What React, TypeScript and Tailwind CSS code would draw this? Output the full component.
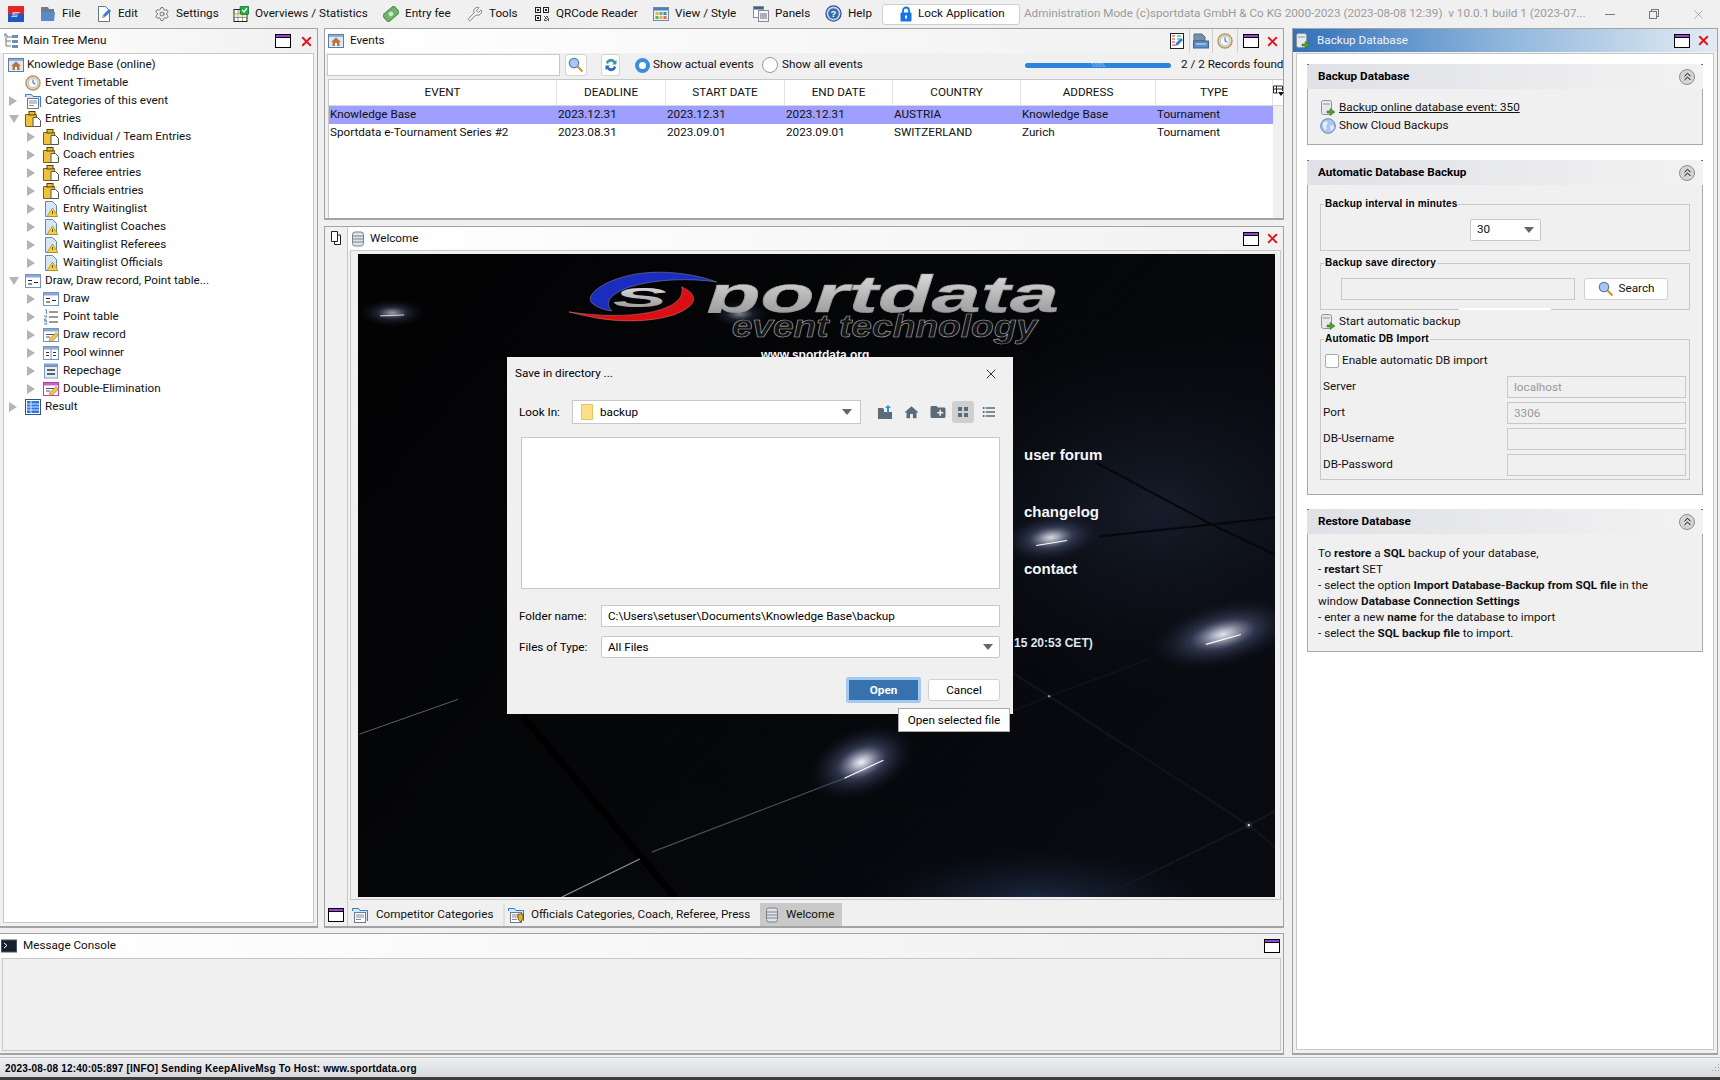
import { ChevronsUp, Settings, Wrench, X } from "lucide-react";
import { MdCreateNewFolder, MdFormatListBulleted, MdHome } from "react-icons/md";
import type { ReactNode } from "react";

const MinBox = () => (
  <span className="inline-flex flex-col w-[16px] h-[14px] border border-black bg-white shrink-0">
    <span className="h-[2px] bg-[#9a3ee0]" />
    <span className="h-px bg-black" />
  </span>
);

const RedX = () => <X size={15} strokeWidth={3} className="text-[#e8141c] shrink-0" />;

const Ico = ({ children }: { children: ReactNode }) => (
  <svg viewBox="0 0 16 16" width="16" height="16" className="shrink-0">
    {children}
  </svg>
);

const AppLogo = () => (
  <Ico>
    <rect width="16" height="8" fill="#e3262b" />
    <rect y="8" width="16" height="8" fill="#1d59c4" />
    <path d="M5 6h7l-1 1.500H6.500L5.500 9H10l-1 2H3l1-1.500h4.500L9 8.500H4z" fill="#c9ccd2" />
  </Ico>
);
const FileIco = () => (
  <Ico>
    <path d="M1 1h7l1 2h5v11H1z" fill="#6d7b8c" />
    <path d="M1 6h14l-1 9H1z" fill="#5b8ac6" />
  </Ico>
);
const EditIco = () => (
  <Ico>
    <path d="M2.500.5h7l4 4v11h-11z" fill="#fff" stroke="#66768a" />
    <path d="M6 12l1-3 6-6 2 2-6 6z" fill="#2f7fdc" />
    <path d="M6 12l1-3 2 2z" fill="#e9b44c" />
  </Ico>
);
const OverIco = () => (
  <Ico>
    <rect x="1" y="3.500" width="13" height="12" fill="#fff" stroke="#222" />
    <path d="M1 8h13M1 11.500h13M5 4v11M9.500 4v11" stroke="#555" strokeWidth=".6" />
    <rect x="1.500" y="8" width="12" height="3" fill="#f3df8c" opacity=".7" />
    <rect x="7" y="0" width="9" height="8.500" rx="1.500" fill="#27a64a" stroke="#0a5d22" strokeWidth=".6" />
    <path d="M9 4l2 2 3-4" fill="none" stroke="#fff" strokeWidth="1.300" />
  </Ico>
);
const MoneyIco = () => (
  <Ico>
    <g transform="rotate(-40 8 8)">
      <rect x="0.500" y="3.500" width="15" height="9" rx="1" fill="#72b36a" stroke="#4b8b46" />
      <circle cx="8" cy="8" r="2.300" fill="#cfe8c5" />
    </g>
  </Ico>
);
const QR_CELLS = ["1110101", "1010011", "1110110", "0001010", "1101101", "0110011", "1011101"];
const QrIco = () => (
  <Ico>
    <path d="M1 1h6v6H1zM2 2v4h4V2zM9 1h6v6H9zM10 2v4h4V2zM1 9h6v6H1zM2 10v4h4v-4z" fill="#222" fillRule="evenodd" />
    <path d="M3 3h2v2H3zM11 3h2v2h-2zM3 11h2v2H3z" fill="#222" />
    {QR_CELLS.map((row, y) =>
      row.split("").map((c, x) =>
        c === "1" && x > 1 && y > 1 ? <rect key={`${x}${y}`} x={8 + x} y={8 + y} width=".9" height=".9" fill="#333" /> : null
      )
    )}
  </Ico>
);
const ViewIco = () => (
  <Ico>
    <rect x=".5" y="1.500" width="15" height="13" fill="#e9eef6" stroke="#6f88aa" />
    <rect x="1" y="2" width="14" height="2.500" fill="#4a7fc1" />
    <rect x="2.500" y="6" width="3" height="3" fill="#e4b73a" />
    <rect x="6.500" y="6" width="3" height="3" fill="#62b256" />
    <rect x="10.500" y="6" width="3" height="3" fill="#4a7fc1" />
    <rect x="2.500" y="10" width="3" height="3" fill="#62b256" />
    <rect x="6.500" y="10" width="3" height="3" fill="#e4b73a" />
    <rect x="10.500" y="10" width="3" height="3" fill="#d76a5a" />
  </Ico>
);
const PanelsIco = () => (
  <Ico>
    <rect x=".5" y=".5" width="10" height="11" fill="#fff" stroke="#8a8a8a" />
    <rect x="1" y="1" width="9" height="2.500" fill="#3c5f92" />
    <rect x="5.500" y="4.500" width="10" height="11" fill="#f4f4f4" stroke="#8a8a8a" />
    <path d="M7 8h7M7 10h7M7 12h7" stroke="#5a6d88" />
  </Ico>
);
const HelpIco = () => (
  <svg viewBox="0 0 18 18" width="17" height="17" className="shrink-0">
    <circle cx="9" cy="9" r="8" fill="#c3d4ea" stroke="#2f5590" strokeWidth="1.400" />
    <circle cx="9" cy="9" r="5.500" fill="#3a69aa" />
    <text x="9" y="12.500" textAnchor="middle" fontSize="10" fontWeight="700" fontFamily="Liberation Sans" fill="#fff">?</text>
  </svg>
);
const LockIco = () => (
  <svg viewBox="0 0 12 16" width="12" height="16" className="shrink-0">
    <path d="M3 7V4.500a3 3 0 016 0V7" fill="none" stroke="#1673e6" strokeWidth="1.800" />
    <rect x="0.500" y="6.500" width="11" height="9" rx="1" fill="#1673e6" />
    <rect x="5" y="9.500" width="2" height="3" fill="#fff" />
  </svg>
);

const TreeIco = () => (
  <Ico>
    <path d="M1 2h3v2h5M3 4v9h5M3 8h5" fill="none" stroke="#777" />
    <rect x="9" y="2" width="6" height="3" fill="#6f8db5" />
    <rect x="9" y="7" width="6" height="3" fill="#6f8db5" />
    <rect x="9" y="12" width="6" height="3" fill="#6f8db5" />
    <rect x="1" y="0.500" width="3" height="3" fill="#9ab" />
  </Ico>
);
const HomeIco = () => (
  <Ico>
    <rect x=".5" y="1.500" width="15" height="13" fill="#dfe9f5" stroke="#5d7da6" />
    <rect x="1" y="2" width="14" height="2" fill="#8fb0d8" />
    <path d="M8 4.500l5 4.500h-1.500v4h-7V9H3z" fill="#b6763e" />
    <rect x="7" y="10" width="2" height="3" fill="#fff" />
  </Ico>
);
const ClockIco = () => (
  <Ico>
    <circle cx="8" cy="8" r="7" fill="#e9ddc3" stroke="#b79a62" strokeWidth="1.500" />
    <circle cx="8" cy="8" r="4.800" fill="#f4f7fb" stroke="#8fa6c4" strokeWidth=".6" />
    <path d="M8 4.500V8l2.500 1" fill="none" stroke="#3c5f92" strokeWidth="1" />
  </Ico>
);
const CatIco = ({ badge }: { badge?: boolean }) => (
  <Ico>
    <path d="M.5 4V1.500h6L8 3.500h7.500V14" fill="#d7e6f7" stroke="#2c7fd4" />
    <rect x="2.500" y="5.500" width="11" height="10" fill="#fff" stroke="#6d7b8c" />
    <path d="M4 8h8M4 10h8M4 12.500h5" stroke="#7d8a99" />
    {badge && <path d="M10 7h5v5l-2.500 3L10 12z" fill="#e0b21c" stroke="#222" strokeWidth=".6" />}
  </Ico>
);
const ClipIco = () => (
  <Ico>
    <path d="M4.500 1.500h5v2h2v12h-11v-12h4z" fill="#f0c23c" stroke="#7c5f14" />
    <rect x="4" y="0.500" width="6" height="3.500" fill="#e6bb3a" stroke="#55430f" />
    <path d="M8 6.500h4.500l3 3v6H8z" fill="#fff" stroke="#555" />
  </Ico>
);
const WaitIco = () => (
  <Ico>
    <path d="M2.500.5h7l4 4v11h-11z" fill="#d7e6f7" stroke="#5b86b9" />
    <path d="M9.500 7l5.500 8.500H4z" fill="#f6cf3f" stroke="#a8861a" strokeWidth=".7" />
    <path d="M9.500 10v3" stroke="#6a4f05" />
  </Ico>
);
const WinIco = ({ head = "#6f94c5", children }: { head?: string; children?: ReactNode }) => (
  <Ico>
    <rect x=".5" y="1.500" width="15" height="13" fill="#fff" stroke={head} />
    <rect x="1" y="2" width="14" height="2.500" fill={head} opacity=".8" />
    {children}
  </Ico>
);
const DrawIco = () => (
  <WinIco>
    <path d="M3 7.500h4M3 11h4M9 9.500h4" stroke="#222" />
  </WinIco>
);
const PointIco = () => (
  <Ico>
    <path d="M6 3h9M6 8h9M6 13h9" stroke="#333" strokeWidth="1.200" />
    <path d="M2 1h1.500v4M1 7h3L1 11h3M1 12h3l-1 1.500 1 1.500H1" fill="none" stroke="#5b8ac6" />
  </Ico>
);
const PencilBit = () => <path d="M6 15l1-3.500 6-6 2.500 2.500-6 6z" fill="#f1c24e" stroke="#8c6a1c" strokeWidth=".6" />;
const RecordIco = () => (
  <WinIco>
    <path d="M3 7.500h8M3 10h4" stroke="#555" />
    <PencilBit />
  </WinIco>
);
const PoolIco = () => (
  <WinIco>
    <path d="M8 4v10" stroke="#6f94c5" />
    <path d="M3 7.500h3M3 10.500h3M10 7.500h3M10 10.500h3" stroke="#333" />
  </WinIco>
);
const RepIco = () => (
  <Ico>
    <rect x="1.500" y="1" width="13" height="14" fill="#e7edf5" stroke="#7c99c0" />
    <rect x="2" y="1.500" width="12" height="2.500" fill="#6f94c5" />
    <path d="M4 7h8M4 11h8" stroke="#333" strokeWidth="1.500" />
  </Ico>
);
const DoubleIco = () => (
  <WinIco head="#b93db8">
    <path d="M3 7.500h8M3 10h4" stroke="#555" />
    <PencilBit />
  </WinIco>
);
const ResultIco = () => (
  <Ico>
    <rect x=".5" y=".5" width="15" height="15" fill="#fff" stroke="#34507c" />
    <rect x="2" y="2" width="12" height="12" fill="#2d78e0" />
    <path d="M2 5h12M2 8h12M2 11h12M6 2v12" stroke="#fff" strokeWidth=".8" />
  </Ico>
);
const DbIco = () => (
  <Ico>
    <rect x="2.500" y="1" width="11" height="14" rx="2.500" fill="#dfe3e8" stroke="#78838f" />
    <path d="M3 5h10M3 8h10M3 11h10" stroke="#78838f" />
  </Ico>
);
const DbArrowIco = () => (
  <Ico>
    <rect x="1.500" y=".5" width="10" height="14" rx="2" fill="#e6e9ed" stroke="#8a949e" />
    <path d="M3 4h7" stroke="#8a949e" />
    <path d="M7 11h3V8.500l5 3.500-5 3.500V13H7z" fill="#4f9e37" stroke="#2c6b1b" strokeWidth=".5" />
  </Ico>
);
const GlobeIco = () => (
  <Ico>
    <circle cx="8" cy="8" r="7.300" fill="#a9c8ee" stroke="#5b86b9" />
    <path d="M3 5l3-2 2 2-2 3 1 3-2 1-2-3zM10 8l3-1 1 3-3 3z" fill="#e8eef6" />
  </Ico>
);
const TerminalIco = () => (
  <Ico>
    <rect x=".5" y="2" width="15" height="12" fill="#16212e" stroke="#44546a" />
    <path d="M3 5l3 2.500L3 10" fill="none" stroke="#fff" />
  </Ico>
);
const CopyIco = () => (
  <Ico>
    <path d="M3.500 1.500h6v10h-6zM9.500 5h3v9.500h-6v-3" fill="#fff" stroke="#222" />
  </Ico>
);
const RefreshIco = () => (
  <Ico>
    <path d="M3 6a5 5 0 019-2l1.500-1v4.500H9l1.500-1.300A3 3 0 005 7z" fill="#3a9aa8" />
    <path d="M13 10a5 5 0 01-9 2l-1.500 1V8.500H7l-1.500 1.300A3 3 0 0011 9z" fill="#2d6fb5" />
  </Ico>
);
const SearchIco = () => (
  <Ico>
    <circle cx="6" cy="6" r="4.700" fill="#a8c8f0" stroke="#5b7fb4" strokeWidth="1.200" />
    <path d="M9.500 9.500l5 5" stroke="#c8962c" strokeWidth="2.200" />
  </Ico>
);
const SheetIco = () => (
  <Ico>
    <rect x="1.500" y=".5" width="13" height="15" fill="#fff" stroke="#222" />
    <path d="M3 3h3M3 6h3M3 9h3M3 12h3" stroke="#d2392f" />
    <path d="M8 3h4M8 6h3" stroke="#2f9e44" />
    <path d="M6 13l1-3 5-5 2 2-5 5z" fill="#2f7fdc" />
  </Ico>
);
const PrintIco = () => (
  <Ico>
    <path d="M1 1h8l3 3v4H1z" fill="#7d8fa8" stroke="#556a86" />
    <rect x=".5" y="8" width="15" height="7" fill="#5f8ec6" stroke="#3e6493" />
    <path d="M3 11h10" stroke="#dfe9f5" />
  </Ico>
);
const ColsIco = () => (
  <svg viewBox="0 0 12 12" width="12" height="12">
    <path d="M.5 1h9v5M.5 1v7h4M3.500 1v7M.5 4h9" fill="none" stroke="#222" />
    <path d="M5 7h6l-3 4z" fill="#111" />
  </svg>
);
const Grip = () => (
  <svg viewBox="0 0 12 12" width="12" height="12" className="shrink-0">
    <path d="M10 2h1v1h-1zM7 5h1v1H7zM10 5h1v1h-1zM4 8h1v1H4zM7 8h1v1H7zM10 8h1v1h-1z" fill="#9a9a9a" />
  </svg>
);

const MENU: { icon: ReactNode; label: string; w: string }[] = [
  { icon: <FileIco />, label: "File", w: "w-[56px]" },
  { icon: <EditIco />, label: "Edit", w: "w-[58px]" },
  { icon: <Settings size={16} strokeWidth={1.5} className="text-[#707070]" />, label: "Settings", w: "w-[79px]" },
  { icon: <OverIco />, label: "Overviews / Statistics", w: "w-[150px]" },
  { icon: <MoneyIco />, label: "Entry fee", w: "w-[84px]" },
  { icon: <Wrench size={16} strokeWidth={1.3} className="text-[#777]" />, label: "Tools", w: "w-[67px]" },
  { icon: <QrIco />, label: "QRCode Reader", w: "w-[119px]" },
  { icon: <ViewIco />, label: "View / Style", w: "w-[100px]" },
  { icon: <PanelsIco />, label: "Panels", w: "w-[72px]" },
  { icon: <HelpIco />, label: "Help", w: "w-[57px]" },
];

function TopBar() {
  return (
    <div className="h-[28px] flex items-center shrink-0 pl-[8px]">
      <div className="w-[32px]">
        <AppLogo />
      </div>
      {MENU.map((m) => (
        <div key={m.label} className={`${m.w} flex items-center gap-[6px] shrink-0`}>
          {m.icon}
          <span className="whitespace-nowrap">{m.label}</span>
        </div>
      ))}
      <div className="w-[138px] h-[21px] bg-white border border-[#cfcfcf] rounded-[3px] flex items-center gap-[6px] pl-[17px] shrink-0">
        <LockIco />
        <span>Lock Application</span>
      </div>
      <div className="w-[575px] ml-[4px] text-[#9b9b9b] whitespace-nowrap shrink-0">
        Administration Mode (c)sportdata GmbH &amp; Co KG 2000-2023 (2023-08-08 12:39)&nbsp; v 10.0.1 build 1 (2023-07...
      </div>
      <div className="flex-1 flex items-center pl-[6px] gap-[34px] text-[#8a8a8a]">
        <span className="w-[10px] h-px bg-[#777]" />
        <span className="relative w-[10px] h-[10px]">
          <span className="absolute left-[2px] top-0 w-[8px] h-[8px] border border-[#777]" />
          <span className="absolute left-0 top-[2px] w-[8px] h-[8px] border border-[#777] bg-[#f0f0f0]" />
        </span>
        <X size={15} strokeWidth={1} className="ml-[-2px]" />
      </div>
    </div>
  );
}

type Node = { label: string; icon: ReactNode; lvl: 0 | 1 | 2; arrow?: "r" | "d" };
const TREE: Node[] = [
  { label: "Knowledge Base (online)", icon: <HomeIco />, lvl: 0 },
  { label: "Event Timetable", icon: <ClockIco />, lvl: 1 },
  { label: "Categories of this event", icon: <CatIco />, lvl: 1, arrow: "r" },
  { label: "Entries", icon: <ClipIco />, lvl: 1, arrow: "d" },
  { label: "Individual / Team Entries", icon: <ClipIco />, lvl: 2, arrow: "r" },
  { label: "Coach entries", icon: <ClipIco />, lvl: 2, arrow: "r" },
  { label: "Referee entries", icon: <ClipIco />, lvl: 2, arrow: "r" },
  { label: "Officials entries", icon: <ClipIco />, lvl: 2, arrow: "r" },
  { label: "Entry Waitinglist", icon: <WaitIco />, lvl: 2, arrow: "r" },
  { label: "Waitinglist Coaches", icon: <WaitIco />, lvl: 2, arrow: "r" },
  { label: "Waitinglist Referees", icon: <WaitIco />, lvl: 2, arrow: "r" },
  { label: "Waitinglist Officials", icon: <WaitIco />, lvl: 2, arrow: "r" },
  { label: "Draw, Draw record, Point table...", icon: <DrawIco />, lvl: 1, arrow: "d" },
  { label: "Draw", icon: <DrawIco />, lvl: 2, arrow: "r" },
  { label: "Point table", icon: <PointIco />, lvl: 2, arrow: "r" },
  { label: "Draw record", icon: <RecordIco />, lvl: 2, arrow: "r" },
  { label: "Pool winner", icon: <PoolIco />, lvl: 2, arrow: "r" },
  { label: "Repechage", icon: <RepIco />, lvl: 2, arrow: "r" },
  { label: "Double-Elimination", icon: <DoubleIco />, lvl: 2, arrow: "r" },
  { label: "Result", icon: <ResultIco />, lvl: 1, arrow: "r" },
];

function TreeRow({ n }: { n: Node }) {
  const offset = n.lvl === 0 ? "pl-[4px] gap-[3px]" : n.lvl === 1 ? "pl-[4px] gap-[4px]" : "pl-[22px] gap-[4px]";
  return (
    <div className={`h-[18px] flex items-center ${offset}`}>
      {n.lvl > 0 && (
        <span className="w-[13px] pl-px shrink-0 flex items-center">
          {n.arrow === "r" && <span className="w-0 h-0 border-y-[5px] border-y-transparent border-l-[8px] border-l-[#b4b4b4]" />}
          {n.arrow === "d" && <span className="w-0 h-0 border-x-[5px] border-x-transparent border-t-[8px] border-t-[#b4b4b4]" />}
        </span>
      )}
      {n.icon}
      <span className="whitespace-nowrap">{n.label}</span>
    </div>
  );
}

const COLS = "grid grid-cols-[228px_109px_119px_108px_128px_135px_117px]";
const HEAD = ["EVENT", "DEADLINE", "START DATE", "END DATE", "COUNTRY", "ADDRESS", "TYPE"];
const ROWS = [
  ["Knowledge Base", "2023.12.31", "2023.12.31", "2023.12.31", "AUSTRIA", "Knowledge Base", "Tournament"],
  ["Sportdata e-Tournament Series #2", "2023.08.31", "2023.09.01", "2023.09.01", "SWITZERLAND", "Zurich", "Tournament"],
];

function Events() {
  return (
    <div className="h-[192px] border border-[#a3a3a3] border-b-2 flex flex-col shrink-0">
      <div className="h-[24px] flex items-center pl-[3px] pr-[3px] bg-linear-to-r from-white to-[#f0f0f0] shrink-0">
        <HomeIco />
        <span className="ml-[6px]">Events</span>
        <div className="ml-auto flex items-center">
          <div className="flex items-center pr-[4px] border-r border-[#d0d0d0] h-[24px]"><SheetIco /></div>
          <div className="flex items-center px-[3px] border-r border-[#d0d0d0] h-[24px]"><PrintIco /></div>
          <div className="flex items-center px-[4px] border-r border-[#d0d0d0] h-[24px]"><ClockIco /></div>
          <div className="flex items-center gap-[6px] pl-[5px]"><MinBox /><RedX /></div>
        </div>
      </div>
      <div className="h-[26px] flex items-center pl-[2px] pb-[2px] shrink-0 whitespace-nowrap">
        <div className="w-[233px] h-[22px] bg-white border border-[#c8c8c8] shrink-0" />
        <div className="ml-[5px] w-[22px] h-[22px] bg-white border border-[#d5d5d5] rounded-[3px] flex items-center justify-center shrink-0"><SearchIco /></div>
        <div className="ml-[14px] w-[19px] h-[22px] bg-white border border-[#d5d5d5] rounded-[3px] flex items-center justify-center shrink-0"><RefreshIco /></div>
        <span className="ml-[15px] w-[15px] h-[15px] rounded-full border-[4px] border-[#3c8ddc] bg-white shrink-0" />
        <span className="ml-[3px] w-[109px] shrink-0">Show actual events</span>
        <span className="w-[16px] h-[16px] rounded-full border border-[#9a9a9a] bg-white shrink-0" />
        <span className="ml-[4px] w-[81px] shrink-0">Show all events</span>
        <div className="ml-[162px] w-[146px] h-[5px] rounded-full bg-[#2a84dd] flex items-center justify-center shrink-0">
          <span className="text-[6px] text-[#9cc4ee] leading-none">100%</span>
        </div>
        <span className="ml-[10px]">2 / 2 Records found</span>
      </div>
      <div className="flex-1 ml-[3px] border-t border-[#c8c8c8] border-l flex flex-col bg-white min-h-0">
        <div className="flex h-[26px] bg-white border-b border-[#d8d8d8] shrink-0">
          <div className={COLS}>
            {HEAD.map((h) => (
              <div key={h} className="flex items-center justify-center border-r border-[#e4e4e4]">{h}</div>
            ))}
          </div>
          <div className="flex-1 flex justify-center pt-[5px]"><ColsIco /></div>
        </div>
        <div className="flex flex-1 min-h-0">
          <div>
            {ROWS.map((r, i) => (
              <div key={r[0]} className={`${COLS} h-[18px] items-center ${i === 0 ? "bg-[#9f9fff]" : ""}`}>
                {r.map((c, j) => (
                  <div key={j} className="pl-px whitespace-nowrap">{c}</div>
                ))}
              </div>
            ))}
          </div>
          <div className="flex-1 bg-[#f0f0f0]" />
        </div>
      </div>
    </div>
  );
}

function Wallpaper() {
  const spots = [
    { cx: 392, cy: 313, rx: 34, ry: 14, r: 0, o: 0.6 },
    { cx: 740, cy: 314, rx: 30, ry: 14, r: 0, o: 0.5 },
    { cx: 1052, cy: 538, rx: 50, ry: 24, r: -8, o: 0.85 },
    { cx: 1224, cy: 635, rx: 74, ry: 32, r: -14, o: 0.9 },
    { cx: 862, cy: 763, rx: 56, ry: 34, r: -22, o: 0.95 },
  ];
  return (
    <svg viewBox="358 254 918 644" className="absolute inset-0 w-full h-full">
      <defs>
        <linearGradient id="wall" x1="0" y1="0" x2="1" y2="0.6">
          <stop offset="0" stopColor="#010102" />
          <stop offset="0.6" stopColor="#040508" />
          <stop offset="1" stopColor="#07090f" />
        </linearGradient>
        <radialGradient id="navy">
          <stop offset="0" stopColor="#171d2d" stopOpacity=".9" />
          <stop offset="1" stopColor="#0a0d14" stopOpacity="0" />
        </radialGradient>
        <radialGradient id="glow">
          <stop offset="0" stopColor="#ffffff" />
          <stop offset="0.15" stopColor="#d5d9ef" stopOpacity=".85" />
          <stop offset="0.45" stopColor="#5a6690" stopOpacity=".5" />
          <stop offset="1" stopColor="#1a2036" stopOpacity="0" />
        </radialGradient>
        <radialGradient id="blue">
          <stop offset="0" stopColor="#20304e" stopOpacity=".9" />
          <stop offset="1" stopColor="#101828" stopOpacity="0" />
        </radialGradient>
        <pattern id="mesh" width="4" height="4" patternUnits="userSpaceOnUse">
          <circle cx="1" cy="1" r=".7" fill="#fff" opacity=".025" />
          <circle cx="3" cy="3" r=".7" fill="#fff" opacity=".025" />
        </pattern>
        <linearGradient id="letters" x1="0" y1="0" x2="0" y2="1">
          <stop offset="0" stopColor="#e6e6e6" />
          <stop offset="1" stopColor="#8f8f8f" />
        </linearGradient>
        <clipPath id="noDesc">
          <rect x="700" y="260" width="380" height="53" />
        </clipPath>
      </defs>
      <rect x="358" y="254" width="918" height="644" fill="url(#wall)" />
      <ellipse cx="1160" cy="510" rx="270" ry="190" fill="url(#navy)" />
      <ellipse cx="1040" cy="905" rx="170" ry="55" fill="url(#blue)" />
      <rect x="358" y="254" width="918" height="644" fill="url(#mesh)" />

      <path d="M1097 463L1213 525 1276 555M1100 537L1213 525 1276 518" stroke="#06070b" strokeWidth="2" fill="none" />
      <path d="M523 717L675 898" stroke="#000" strokeWidth="7" />
      <path d="M1013 712L1050 697 1150 660" stroke="#101216" strokeWidth="2" fill="none" />
      <path d="M1000 665L1050 697 1250 826 1276 848" stroke="#111318" strokeWidth="2.500" fill="none" />
      <path d="M1103 898L1250 826 1276 812" stroke="#15171d" strokeWidth="2" fill="none" />
      <path d="M562 898L640 860" stroke="#8f939c" strokeWidth="1.200" />
      <path d="M652 853L845 779" stroke="#4a4e58" strokeWidth="1.200" />
      <path d="M359 735L458 700" stroke="#5c606a" strokeWidth="1" />
      <circle cx="1050" cy="697" r="1.200" fill="#8d919b" />
      <circle cx="1250" cy="826" r="3.500" fill="#1f2632" />
      <circle cx="1250" cy="826" r="1.200" fill="#d8dce6" />

      {spots.map((s) => (
        <ellipse key={s.cx} cx={s.cx} cy={s.cy} rx={s.rx} ry={s.ry} fill="url(#glow)" opacity={s.o} transform={`rotate(${s.r} ${s.cx} ${s.cy})`} />
      ))}
      <path d="M1037 546L1068 541M1207 645L1242 635M845 779L884 761" stroke="#fff" strokeWidth="1.100" />
      <path d="M380 316L404 315" stroke="#ddd" strokeWidth="1" />

      <path d="M717 282C690 272 650 268 620 278 598 285 586 296 592 303 596 307 604 310 612 311 604 303 610 294 630 287 655 279 690 278 717 282z" fill="#1b2dbf" stroke="#8d93b8" strokeWidth=".5" />
      <path d="M682 287C692 291 697 298 692 304 682 316 655 321 630 321 605 321 585 316 569 312 590 315 615 317 640 314 665 311 686 302 682 287z" fill="#d90f14" stroke="#e8a0a0" strokeWidth=".4" />
      <text x="613" y="307" fontFamily="Liberation Sans" fontSize="28" fontWeight="700" fontStyle="italic" fill="url(#letters)" textLength="54" lengthAdjust="spacingAndGlyphs">S</text>
      <text x="707" y="312" fontFamily="Liberation Sans" fontSize="52" fontStyle="italic" fill="url(#letters)" stroke="#9a9a9a" strokeWidth=".6" textLength="353" lengthAdjust="spacingAndGlyphs" clipPath="url(#noDesc)">portdata</text>
      <text x="732" y="337" fontFamily="Liberation Sans" fontSize="31" fontStyle="italic" fill="#151515" stroke="#b0b0b0" strokeWidth=".55" textLength="306" lengthAdjust="spacingAndGlyphs">event technology</text>
    </svg>
  );
}

function Welcome() {
  return (
    <div className="flex-1 flex border border-[#a3a3a3] border-b-2 min-h-0">
      <div className="w-[23px] flex flex-col items-center justify-between pt-[3px] pb-[4px] border-r border-[#c8c8c8] shrink-0">
        <CopyIco />
        <MinBox />
      </div>
      <div className="flex-1 flex flex-col min-w-0">
        <div className="h-[23px] flex items-center pl-[2px] pr-[3px] bg-linear-to-r from-white to-[#f2f2f2] shrink-0">
          <DbIco />
          <span className="ml-[4px]">Welcome</span>
          <div className="ml-auto flex items-center gap-[6px]"><MinBox /><RedX /></div>
        </div>
        <div className="flex-1 mx-[2px] border border-[#c8c8c8] pl-[7px] pr-[5px] pt-[3px] pb-[2px] min-h-0">
          <div className="relative w-full h-full bg-black overflow-hidden font-['Liberation_Sans',sans-serif] font-bold text-[#f4f6fb]">
            <Wallpaper />
            <span className="absolute left-[403px] top-[94px] text-[12px] leading-[14px]">www.sportdata.org</span>
            <span className="absolute left-[666px] top-[192px] text-[15px] leading-[18px]">user forum</span>
            <span className="absolute left-[666px] top-[249px] text-[15px] leading-[18px]">changelog</span>
            <span className="absolute left-[666px] top-[306px] text-[15px] leading-[18px]">contact</span>
            <span className="absolute left-[656px] top-[382px] text-[12px] leading-[14px] text-[#dfe8f4]">15 20:53 CET)</span>
          </div>
        </div>
        <div className="h-[26px] pt-[3px] flex items-start shrink-0">
          <div className="w-[157px] h-[23px] flex items-center gap-[8px] pl-[4px] border-r-2 border-[#e0e0e0]">
            <CatIco />
            <span className="whitespace-nowrap">Competitor Categories</span>
          </div>
          <div className="w-[255px] h-[23px] flex items-center gap-[7px] pl-[3px]">
            <CatIco badge />
            <span className="whitespace-nowrap">Officials Categories, Coach, Referee, Press</span>
          </div>
          <div className="w-[82px] h-[23px] flex items-center gap-[6px] pl-[4px] bg-[#c9c9c9]">
            <DbIco />
            <span>Welcome</span>
          </div>
        </div>
      </div>
    </div>
  );
}

function Section({ title, className, children }: { title: string; className: string; children: ReactNode }) {
  return (
    <div className={`relative mx-[10px] flex flex-col shrink-0 ${className}`}>
      <span className="absolute left-0 top-0 w-[2px] h-px bg-[#4d78d0]" />
      <span className="absolute right-0 top-0 w-[2px] h-px bg-[#4d78d0]" />
      <div className="h-[25px] shrink-0 flex items-center justify-between pl-[11px] pr-[8px] bg-linear-to-r from-[#e0e1e6] to-[#f2f2f2] font-bold text-black">
        {title}
        <span className="w-[16px] h-[16px] rounded-full border border-[#8d8d8d] bg-[#d5d5d5] flex items-center justify-center">
          <ChevronsUp size={13} strokeWidth={1.8} className="text-black" />
        </span>
      </div>
      <div className="flex-1 border border-t-0 border-[#a8a8a8] bg-[#f0f0f0] min-h-0">{children}</div>
    </div>
  );
}

const LEGEND = "ml-[3px] px-px h-[14px] leading-[14px] text-[10px] font-bold tracking-[0.2px] font-['Liberation_Sans',sans-serif] text-black";

function DbField({ label, value }: { label: string; value?: string }) {
  return (
    <div className="flex items-center justify-between h-[22px] pl-[2px] pr-[3px]">
      <span>{label}</span>
      <div className="w-[179px] h-[22px] border border-[#c8c8c8] bg-[#f0f0f0] pl-[6px] leading-[20px] text-[#999]">{value}</div>
    </div>
  );
}

function Backup() {
  return (
    <div className="w-[426px] h-full border border-[#a3a3a3] border-b-2 flex flex-col shrink-0">
      <div className="h-[23px] flex items-center pl-[2px] pr-[6px] bg-linear-to-r from-[#3172b8] via-[#8fb6dc] to-[#e4ecf3] shrink-0">
        <DbArrowIco />
        <span className="ml-[6px] text-[#eef4fb]">Backup Database</span>
        <div className="ml-auto flex items-center gap-[6px]"><MinBox /><RedX /></div>
      </div>
      <div className="flex-1 mx-[3px] mb-[3px] mt-px bg-white border border-[#c8c8c8] pt-[10px] flex flex-col min-h-0">
        <Section title="Backup Database" className="h-[81px]">
          <div className="pt-[10px] pl-[12px]">
            <div className="h-[18px] flex items-center gap-[3px]">
              <DbArrowIco />
              <span className="underline">Backup online database event: 350</span>
            </div>
            <div className="h-[18px] flex items-center gap-[3px]">
              <GlobeIco />
              <span>Show Cloud Backups</span>
            </div>
          </div>
        </Section>
        <Section title="Automatic Database Backup" className="h-[335px] mt-[15px]">
          <div className="px-[12px] pt-[12px]">
            <fieldset className="h-[54px] border border-[#c8c8c8]">
              <legend className={LEGEND}>Backup interval in minutes</legend>
              <div className="mt-[8px] ml-[149px] w-[71px] h-[22px] bg-white border border-[#c8c8c8] rounded-[2px] flex items-center justify-between pl-[6px] pr-[6px]">
                30
                <span className="w-0 h-0 border-x-[5px] border-x-transparent border-t-[6px] border-t-[#666]" />
              </div>
            </fieldset>
            <fieldset className="relative h-[54px] mt-[5px] border border-[#c8c8c8]">
              <legend className={LEGEND}>Backup save directory</legend>
              <div className="mt-[8px] ml-[20px] flex">
                <div className="w-[234px] h-[22px] border border-[#c8c8c8] bg-[#f0f0f0]" />
                <div className="ml-[9px] w-[84px] h-[22px] bg-white border border-[#d0d0d0] rounded-[3px] flex items-center justify-center gap-[5px]">
                  <SearchIco />
                  <span>Search</span>
                </div>
              </div>
              <span className="absolute left-[138px] bottom-[-1px] w-[92px] h-[2px] bg-white rounded-t-[2px]" />
            </fieldset>
            <div className="h-[22px] flex items-center gap-[3px] pt-px">
              <DbArrowIco />
              <span>Start automatic backup</span>
            </div>
            <fieldset className="h-[148px] border border-[#c8c8c8]">
              <legend className={LEGEND}>Automatic DB Import</legend>
              <label className="mt-[8px] ml-[4px] flex items-center gap-[3px] h-[14px]">
                <span className="w-[14px] h-[14px] bg-white border border-[#aaa] rounded-[2px]" />
                Enable automatic DB import
              </label>
              <div className="mt-[8px] flex flex-col gap-[4px]">
                <DbField label="Server" value="localhost" />
                <DbField label="Port" value="3306" />
                <DbField label="DB-Username" />
                <DbField label="DB-Password" />
              </div>
            </fieldset>
          </div>
        </Section>
        <Section title="Restore Database" className="h-[143px] mt-[14px]">
          <div className="pt-[11px] pl-[10px] leading-[16px]">
            <div>To <b>restore</b> a <b>SQL</b> backup of your database,</div>
            <div>- <b>restart</b> SET</div>
            <div>- select the option <b>Import Database-Backup from SQL file</b> in the</div>
            <div>window <b>Database Connection Settings</b></div>
            <div>- enter a new <b>name</b> for the database to import</div>
            <div>- select the <b>SQL backup file</b> to import.</div>
          </div>
        </Section>
      </div>
    </div>
  );
}

function SaveDialog() {
  return (
    <>
      <div className="absolute left-[507px] top-[357px] w-[506px] h-[357px] bg-[#f0f0f0] flex flex-col text-black">
        <div className="h-[34px] flex items-center justify-between pl-[8px] pr-[14px] shrink-0">
          <span>Save in directory ...</span>
          <X size={16} strokeWidth={1.2} />
        </div>
        <div className="mt-[9px] h-[24px] flex items-center pl-[12px] shrink-0">
          <span className="w-[53px] pt-px">Look In:</span>
          <div className="w-[289px] h-[24px] bg-white border border-[#c8c8c8] flex items-center pl-[8px] pr-[8px]">
            <span className="w-[12px] h-[16px] bg-[#ffe08a] border border-[#e8c35a] rounded-[1px] mr-[7px]" />
            <span className="pt-px">backup</span>
            <span className="ml-auto w-0 h-0 border-x-[5px] border-x-transparent border-t-[6px] border-t-[#666]" />
          </div>
          <div className="ml-[16px] flex items-center text-[#5b6b78]">
            <svg viewBox="0 0 16 16" width="16" height="16">
              <path d="M1 4h5l1 1.500V15H1zM7 8h8v7H7z" fill="#5b6b78" />
              <path d="M11 1l3 3h-2v5h-2V4H8z" fill="#2e8fe0" />
            </svg>
            <MdHome size={17} className="ml-[10px]" />
            <MdCreateNewFolder size={18} className="ml-[9px]" />
            <div className="ml-[5px] w-[22px] h-[22px] rounded-[3px] bg-[#cfcfcf] flex items-center justify-center">
              <svg viewBox="0 0 12 12" width="12" height="12">
                <path d="M1 1h4v4H1zM7 1h4v4H7zM1 7h4v4H1zM7 7h4v4H7z" fill="#5b6b78" />
              </svg>
            </div>
            <MdFormatListBulleted size={16} className="ml-[7px]" />
          </div>
        </div>
        <div className="mt-[13px] ml-[14px] w-[479px] h-[152px] bg-white border border-[#c8c8c8] shrink-0" />
        <div className="mt-[16px] h-[22px] flex items-center pl-[12px] shrink-0">
          <span className="w-[82px] pt-px">Folder name:</span>
          <div className="w-[399px] h-[22px] bg-white border border-[#c8c8c8] pl-[6px] leading-[21px] whitespace-nowrap">C:\Users\setuser\Documents\Knowledge Base\backup</div>
        </div>
        <div className="mt-[9px] h-[22px] flex items-center pl-[12px] shrink-0">
          <span className="w-[82px] pt-px">Files of Type:</span>
          <div className="w-[399px] h-[22px] bg-white border border-[#c8c8c8] rounded-[2px] pl-[6px] pr-[6px] flex items-center justify-between">
            <span className="pt-px">All Files</span>
            <span className="w-0 h-0 border-x-[5px] border-x-transparent border-t-[6px] border-t-[#666]" />
          </div>
        </div>
        <div className="mt-[19px] flex items-center justify-end gap-[7px] pr-[13px] shrink-0">
          <div className="w-[75px] h-[26px] pt-px bg-[#3672ae] border-[3px] border-[#a3c9ee] rounded-[3px] flex items-center justify-center text-white font-bold">Open</div>
          <div className="w-[72px] h-[22px] pt-px bg-white border border-[#d0d0d0] rounded-[3px] flex items-center justify-center">Cancel</div>
        </div>
      </div>
      <div className="absolute left-[898px] top-[708px] w-[112px] h-[24px] pt-px bg-white border border-[#a8a8a8] flex items-center justify-center text-black whitespace-nowrap">Open selected file</div>
    </>
  );
}

export default function App() {
  return (
    <div className="relative w-[1720px] h-[1080px] overflow-hidden flex flex-col bg-[#f0f0f0] text-[11.7px] text-[#111] font-['Roboto',sans-serif]">
      <TopBar />
      <div className="flex-1 flex min-h-0">
        <div className="w-[1284px] flex flex-col shrink-0">
          <div className="h-[900px] flex gap-[6px] shrink-0">
            <div className="w-[318px] border border-l-0 border-[#a3a3a3] border-b-2 flex flex-col shrink-0">
              <div className="h-[24px] flex items-center pl-[3px] pr-[3px] bg-linear-to-r from-white to-[#f0f0f0] shrink-0">
                <TreeIco />
                <span className="ml-[4px]">Main Tree Menu</span>
                <div className="ml-auto flex items-center gap-[8px]"><MinBox /><RedX /></div>
              </div>
              <div className="flex-1 ml-[3px] mr-[3px] mb-[3px] border border-[#c8c8c8] bg-white pt-[2px] min-h-0">
                {TREE.map((n) => (
                  <TreeRow key={n.label} n={n} />
                ))}
              </div>
            </div>
            <div className="flex-1 flex flex-col gap-[6px] min-w-0">
              <Events />
              <Welcome />
            </div>
          </div>
          <div className="mt-[5px] flex-1 flex flex-col border border-l-0 border-[#a3a3a3] border-b-2 min-h-0">
            <div className="h-[24px] flex items-center pl-[1px] pr-[3px] bg-linear-to-r from-white to-[#f0f0f0] shrink-0">
              <TerminalIco />
              <span className="ml-[6px]">Message Console</span>
              <div className="ml-auto flex"><MinBox /></div>
            </div>
            <div className="flex-1 mx-[2px] mb-[2px] border border-[#c8c8c8] bg-[#f0f0f0]" />
          </div>
        </div>
        <div className="ml-[8px] flex"><Backup /></div>
      </div>
      <div className="mt-[2px] h-[20px] flex items-center justify-between pl-[5px] pt-px bg-linear-to-b from-[#eceef1] to-[#d8dade] border-t border-[#c0c0c0] shrink-0 font-['Liberation_Sans',sans-serif] font-bold text-[10px] text-black tracking-[0.2px]">
        <span>2023-08-08 12:40:05:897 [INFO] Sending KeepAliveMsg To Host: www.sportdata.org</span>
        <Grip />
      </div>
      <div className="h-[3px] bg-[#3d3d3d] shrink-0" />
      <SaveDialog />
    </div>
  );
}
